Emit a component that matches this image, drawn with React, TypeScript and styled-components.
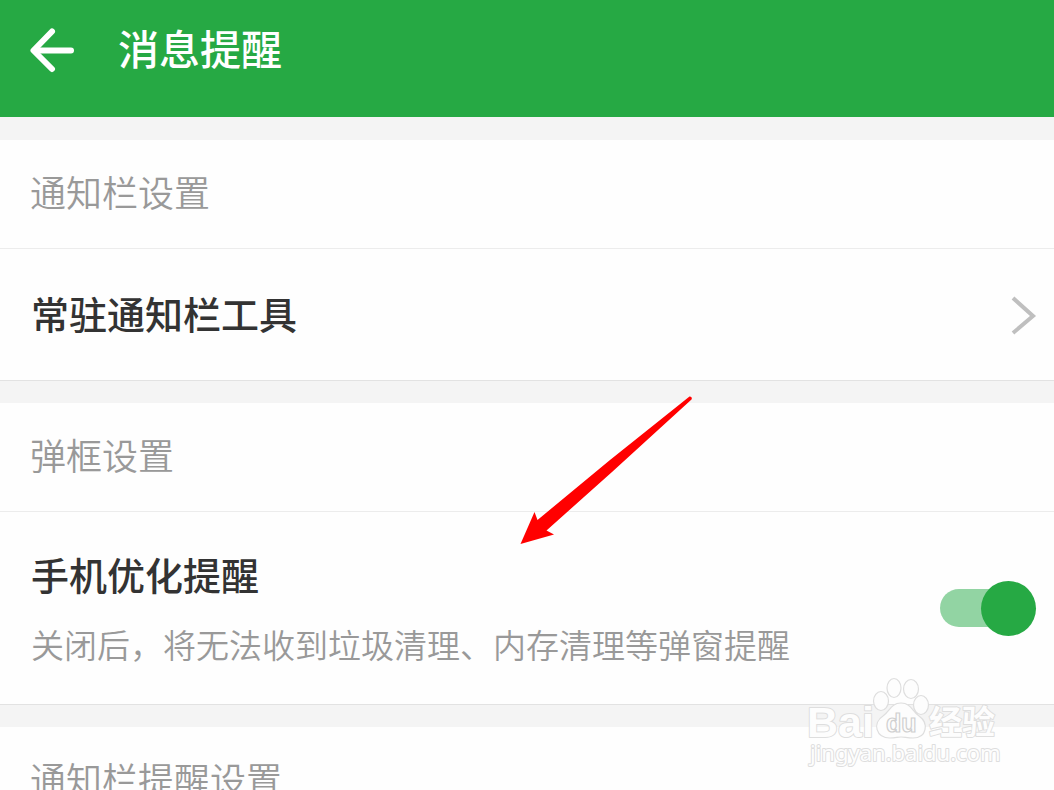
import React from "react";
import styled, { createGlobalStyle } from "styled-components";

const GlobalStyle = createGlobalStyle`
  *, *::before, *::after { box-sizing: border-box; }
  body {
    margin: 0;
    background: #f4f4f4;
    font-family: "Noto Sans CJK SC", sans-serif;
  }
`;

const Page = styled.div`
  position: relative;
  min-height: 100vh;
`;

const Header = styled.header`
  display: flex;
  align-items: center;
  gap: 43px;
  padding: 20px 30px 37px;
  background: #26a944;
  color: #fff;
`;

const BackButton = styled.button`
  display: flex;
  padding: 0;
  border: 0;
  background: none;
  color: inherit;
  cursor: pointer;
`;

const Title = styled.h1`
  margin: 0;
  padding-bottom: 6px;
  font-size: 41px;
  line-height: 54px;
  font-weight: 500;
`;

const Sections = styled.main`
  display: flex;
  flex-direction: column;
  gap: 22px;
  padding-top: 23px;
`;

const Section = styled.section`
  background: #fefefe;
  border-bottom: 1px solid #e2e2e2;
`;

const SectionLabel = styled.h2`
  margin: 0;
  padding: 25px 30px 31px;
  border-bottom: 1px solid #ececec;
  color: #999;
  font-size: 36px;
  line-height: 52px;
  font-weight: 350;
`;

const LinkRow = styled.button`
  display: flex;
  align-items: center;
  justify-content: space-between;
  width: 100%;
  padding: 38px 17px 37px 31px;
  border: 0;
  background: none;
  font-family: inherit;
  text-align: left;
  cursor: pointer;
`;

const SwitchRow = styled.label`
  display: flex;
  align-items: center;
  justify-content: space-between;
  padding: 32px 18px 32px 31px;
  cursor: pointer;
`;

const RowText = styled.span`
  display: flex;
  flex-direction: column;
  gap: 16px;
  padding-top: 4px;
`;

const RowTitle = styled.span`
  padding-bottom: 4px;
  color: #333;
  font-size: 38px;
  line-height: 52px;
  font-weight: 500;
`;

const RowNote = styled.span`
  padding-bottom: 4px;
  color: #999;
  font-size: 33px;
  line-height: 48px;
  font-weight: 350;
`;

const Switch = styled.input`
  appearance: none;
  display: flex;
  align-items: center;
  flex: none;
  width: 96px;
  height: 55px;
  margin: 0;
  cursor: pointer;

  &::before {
    content: "";
    width: 80px;
    height: 38px;
    border-radius: 19px;
    background: #ccc;
  }
  &::after {
    content: "";
    width: 55px;
    height: 55px;
    margin-left: -80px;
    border-radius: 50%;
    background: #999;
  }
  &:checked::before { background: #92d4a3; }
  &:checked::after { margin-left: -39px; background: #26a944; }
`;

const Pointer = styled.svg`
  position: absolute;
  left: 520px;
  top: 395px;
  pointer-events: none;
`;

const Watermark = styled.svg`
  position: absolute;
  right: 50px;
  top: 672px;
  pointer-events: none;
`;

export default function App() {
  return (
    <Page>
      <GlobalStyle />
      <Header>
        <BackButton aria-label="返回">
          <svg width="45" height="46" viewBox="0 0 45 46" fill="none" stroke="currentColor" strokeWidth="6" strokeLinecap="round" strokeLinejoin="round">
            <path d="M22 4.500 3.500 23.500 22 42" />
            <path d="M5 23.500H41" />
          </svg>
        </BackButton>
        <Title>消息提醒</Title>
      </Header>
      <Sections>
        <Section>
          <SectionLabel>通知栏设置</SectionLabel>
          <LinkRow>
            <RowTitle>常驻通知栏工具</RowTitle>
            <svg width="26" height="40" viewBox="0 0 26 40" fill="none" stroke="#bfbfbf" strokeWidth="4">
              <path d="M2 3 22 21 2 38" />
            </svg>
          </LinkRow>
        </Section>
        <Section>
          <SectionLabel>弹框设置</SectionLabel>
          <SwitchRow>
            <RowText>
              <RowTitle>手机优化提醒</RowTitle>
              <RowNote>关闭后，将无法收到垃圾清理、内存清理等弹窗提醒</RowNote>
            </RowText>
            <Switch type="checkbox" role="switch" defaultChecked />
          </SwitchRow>
        </Section>
        <Section>
          <SectionLabel>通知栏提醒设置</SectionLabel>
        </Section>
      </Sections>
      <Pointer width="174" height="150" viewBox="0 0 174 150" fill="#f00" aria-hidden="true">
        <path d="M0.500 149 14.500 117 17.500 125 90 65 169.500 1.500A2 2 0 0 1 171.500 4.500L92 77 26.500 135.500 34 139.500Z" />
      </Pointer>
      <Watermark width="200" height="104" viewBox="0 0 200 104" fill="#fdfdfd" stroke="#dedede" strokeWidth="1.200" aria-hidden="true">
        <g strokeWidth="2" paintOrder="stroke" strokeLinejoin="round">
          <text x="3" y="65" fontFamily="Liberation Sans" fontWeight="700" fontSize="43">Bai</text>
          <text x="125" y="62" fontFamily="Noto Sans CJK SC" fontWeight="700" fontSize="33">经验</text>
          <text x="6" y="89" fontFamily="Noto Sans" fontWeight="400" fontSize="22">jingyan.baidu.com</text>
        </g>
        <ellipse cx="77" cy="29" rx="7.500" ry="9.500" />
        <ellipse cx="90" cy="16" rx="7" ry="9.500" />
        <ellipse cx="107" cy="17" rx="7.500" ry="9.500" />
        <ellipse cx="117" cy="33" rx="7.500" ry="9.500" />
        <path d="M97 31C87 31 86 39 79 44C68 51 72 66 86 66C91 66 94 65 97 65C100 65 104 66 109 66C123 66 125 51 115 44C108 39 107 31 97 31Z" />
        <text x="82" y="60" fontFamily="Liberation Sans" fontWeight="700" fontSize="25" stroke="#d0d0d0">du</text>
      </Watermark>
    </Page>
  );
}
